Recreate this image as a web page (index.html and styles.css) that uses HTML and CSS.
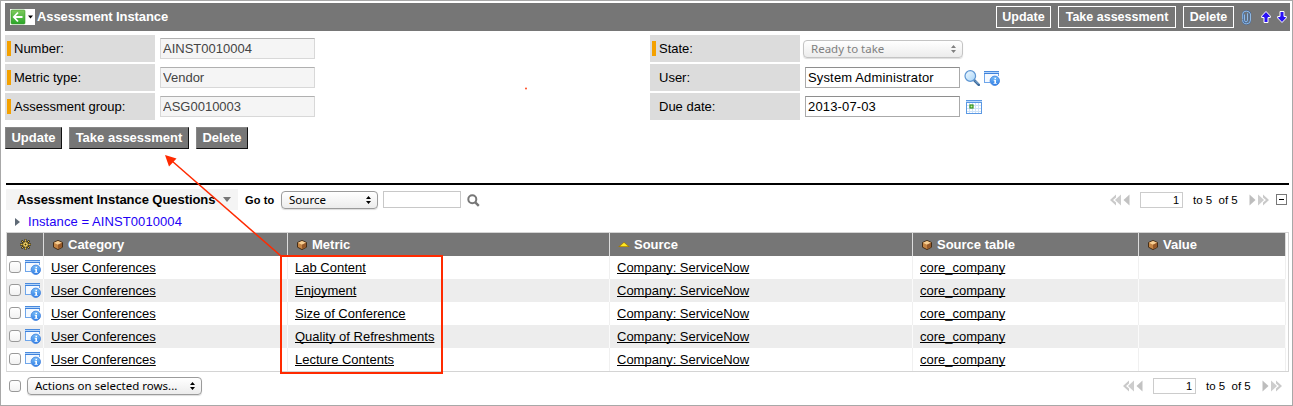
FILE: index.html
```html
<!DOCTYPE html>
<html lang="en">
<head>
<meta charset="utf-8">
<title>Assessment Instance</title>
<link rel="stylesheet" href="styles.css">
</head>
<body>
<svg class="defs" width="0" height="0">
  <defs>
    <linearGradient id="g-green" x1="0" y1="0" x2="0" y2="1"><stop offset="0" stop-color="#7fcb5e"/><stop offset="1" stop-color="#28a528"/></linearGradient>
    <linearGradient id="g-blue" x1="0" y1="0" x2="0" y2="1"><stop offset="0" stop-color="#7cc0f8"/><stop offset="1" stop-color="#2d7ce6"/></linearGradient>
    <linearGradient id="g-lens" x1="0" y1="0" x2="1" y2="1"><stop offset="0" stop-color="#f2faff"/><stop offset="1" stop-color="#a5d3f8"/></linearGradient>
  </defs>
  <symbol id="i-ref" viewBox="0 0 16 16">
    <path d="M1 4h14v8H1z" fill="#f4f9ff"/>
    <path d="M0 1h15v1H0z" fill="#4a8add"/><path d="M0 2h15v1H0z" fill="#b3d5fa"/><path d="M0 3h15v1H0z" fill="#3f82dc"/>
    <path d="M0 4h1v9H0zM1 12h5v1H1zM14 4h1v2h-1z" fill="#6fa6ea"/>
    <circle cx="10.800" cy="10.800" r="4.700" fill="url(#g-blue)" stroke="#3a7cdc" stroke-width=".8"/>
    <path d="M10.500 7.700H12v1.300h-1.500zM9.700 9.800H12v3.100h.8v.9H9.500v-.9h.9v-2.200h-.7z" fill="#fff"/>
  </symbol>
  <symbol id="i-box" viewBox="0 0 10 10">
    <path d="M5 .5 9.500 2.500v4.700L5 9.600.5 7.200V2.500z" fill="#c58544" stroke="#3b2510" stroke-width=".9"/>
    <path d="M5 1 9 2.700 5 4.700 1 2.700z" fill="#f8cf93"/>
    <path d="M5 4.700 9 2.800v4.100L5 9z" fill="#96592a"/>
  </symbol>
  <symbol id="i-rew" viewBox="0 0 20 12">
    <path d="M6 .5v3L3 6l3 2.500v3L0 6z" fill="#c9c9c9"/>
    <path d="M11 .5v11L5 6z" fill="#cdcdcd"/><path d="M19.500 .5v11L13.500 6z" fill="#c2c2c2"/>
  </symbol>
  <symbol id="i-fwd" viewBox="0 0 20 12">
    <path d="M.5 .5v11L6.500 6z" fill="#bdbdbd"/>
    <path d="M9 .5v11L15 6z" fill="#cdcdcd"/><path d="M14 .5 20 6l-6 5.500v-3L17 6l-3-2.500z" fill="#c9c9c9"/>
  </symbol>
  <symbol id="i-updown" viewBox="0 0 5 8"><path d="M2.500 0 5 3H0zM2.500 8 0 5h5z" fill="currentColor"/></symbol>
</svg>

<div class="frame">
  <header class="titlebar">
    <span class="back">
      <svg width="25" height="16" viewBox="0 0 25 16">
        <rect width="25" height="16" fill="#fff"/>
        <rect x="1" y="1" width="14" height="14" rx="1" fill="url(#g-green)" stroke="#3f9a2c" stroke-width=".6"/>
        <path d="M8 3.500 3.800 8 8 12.500M4 8h8.500" fill="none" stroke="#fff" stroke-width="1.800"/>
        <path d="M18 6.500h5l-2.500 3z" fill="#000"/>
      </svg>
    </span>
    <h1>Assessment Instance</h1>
    <div class="tools">
      <button class="tbtn w-update">Update</button>
      <button class="tbtn w-take">Take assessment</button>
      <button class="tbtn w-delete">Delete</button>
      <svg class="clip" width="11" height="15" viewBox="0 0 11 15"><path d="M3.500 4.500v5.700q0 1.600 1.500 1.600t1.500-1.600V3.300M2 9.500V4q0-2.800 3.500-2.800T9.300 4v6q0 3.800-3.800 3.800T2 10" fill="none" stroke="#44699a" stroke-width="1.800"/><path d="M3.500 4.500v5.700q0 1.600 1.500 1.600t1.500-1.600V3.300M1.700 9.500V4q0-2.800 3.500-2.800T9.500 4v6q0 3.800-4 3.800T1.700 10" fill="none" stroke="#98c2ec" stroke-width=".9"/></svg>
      <svg class="up" width="10" height="12" viewBox="0 0 10 12"><path d="M5 .5 9.300 5v1.500H7v5H3v-5H.7V5z" fill="#2a12f5" stroke="#fff"/></svg>
      <svg class="down" width="10" height="12" viewBox="0 0 10 12"><path d="M5 11.500 9.300 7V5.500H7v-5H3v5H.7V7z" fill="#2a12f5" stroke="#fff"/></svg>
    </div>
  </header>

  <section class="form">
    <div class="col">
      <div class="field"><label class="must">Number:</label><input class="ro" value="AINST0010004" readonly></div>
      <div class="field"><label class="must">Metric type:</label><input class="ro" value="Vendor" readonly></div>
      <div class="field"><label class="must">Assessment group:</label><input class="ro" value="ASG0010003" readonly></div>
    </div>
    <div class="col">
      <div class="field"><label class="must">State:</label><span class="select state">Ready to take<svg width="5" height="8"><use href="#i-updown"/></svg></span></div>
      <div class="field"><label>User:</label><input class="rw" value="System Administrator">
        <svg class="lens" width="16" height="16" viewBox="0 0 16 16"><path d="m10.500 10.500 4.300 4.300" stroke="#3c6a9c" stroke-width="2.600" stroke-linecap="round"/><path d="m11 10.500 3.600 3.600" stroke="#8fb8dd"/><circle cx="6.300" cy="6" r="5.300" fill="url(#g-lens)" stroke="#5d95d2" stroke-width="1.200"/></svg>
        <svg class="ref" width="16" height="16"><use href="#i-ref"/></svg></div>
      <div class="field"><label>Due date:</label><input class="rw" value="2013-07-03">
        <svg class="cal" width="16" height="16" viewBox="0 0 16 16"><path d="M0 1h16v14H0z" fill="#5b98e3"/><path d="M0 2h16v1H0z" fill="#b9d9fa"/><path d="M1 4h14v10H1z" fill="#fff"/><path d="M3.500 4v10M6.500 4v10M9.500 4v10M12.500 4v10M1 6.500h14M1 9.500h14M1 12.500h14" stroke="#cfe3f8"/><rect x="4" y="6" width="3" height="3" fill="#bdf29b" stroke="#32901b" stroke-width="1.200"/></svg></div>
    </div>
  </section>

  <div class="actions">
    <button class="btn b-update">Update</button>
    <button class="btn b-take">Take assessment</button>
    <button class="btn b-delete">Delete</button>
  </div>

  <section class="list">
    <div class="listbar">
      <div class="tab"><h2>Assessment Instance Questions</h2><svg width="8" height="5" viewBox="0 0 8 5"><path d="M0 0h8L4 5z" fill="#777"/></svg></div>
      <b class="goto">Go to</b>
      <span class="select source">Source<svg width="5" height="8"><use href="#i-updown"/></svg></span>
      <input class="find">
      <svg class="mag" width="13" height="13" viewBox="0 0 13 13"><circle cx="5.300" cy="5.300" r="4" fill="none" stroke="#777" stroke-width="2"/><path d="m8.300 8.300 3.500 3.500" stroke="#777" stroke-width="2.400"/></svg>
      <div class="pager">
        <svg width="20" height="12"><use href="#i-rew"/></svg><input class="page" value="1"><span>to 5&nbsp; of 5</span><svg width="20" height="12"><use href="#i-fwd"/></svg>
        <svg class="fold" width="11" height="11" viewBox="0 0 11 11"><rect x=".5" y=".5" width="10" height="10" fill="#fff" stroke="#777"/><path d="M3 5h5v1H3z" fill="#000"/></svg>
      </div>
    </div>
    <div class="crumbs"><svg width="5" height="8" viewBox="0 0 5 8"><path d="M0 0v8l5-4z" fill="#5f6a76"/></svg><a>Instance = AINST0010004</a></div>

    <div class="table">
      <div class="row head">
        <div><svg class="gear" width="11" height="11" viewBox="0 0 11 11"><path d="M5.500 0v11M0 5.500h11M1.600 1.600l7.800 7.800M9.400 1.600 1.600 9.400" stroke="#2e2400" stroke-width="1.800"/><path d="M5.500.5v10M.5 5.500h10M2 2l7 7M9 2 2 9" stroke="#f2c84b" stroke-width=".9"/><circle cx="5.500" cy="5.500" r="2.700" fill="#ffe27a" stroke="#4a3700" stroke-width=".8"/><circle cx="5.500" cy="5.500" r="1" fill="#4a3700"/></svg></div>
        <div><svg width="10" height="10"><use href="#i-box"/></svg>Category</div>
        <div><svg width="10" height="10"><use href="#i-box"/></svg>Metric</div>
        <div><svg class="sort" width="12" height="5" viewBox="0 0 12 5"><path d="M0 5 6 0l6 5z" fill="#a67c00"/><path d="M2 4.300 6 .8l4 3.500z" fill="#ffe925"/></svg>Source</div>
        <div><svg width="10" height="10"><use href="#i-box"/></svg>Source table</div>
        <div><svg width="10" height="10"><use href="#i-box"/></svg>Value</div>
      </div>
      <div class="row"><div><i class="check"></i><svg width="16" height="16"><use href="#i-ref"/></svg></div><div><a>User Conferences</a></div><div><a>Lab Content</a></div><div><a>Company: ServiceNow</a></div><div><a>core_company</a></div><div></div></div>
      <div class="row"><div><i class="check"></i><svg width="16" height="16"><use href="#i-ref"/></svg></div><div><a>User Conferences</a></div><div><a>Enjoyment</a></div><div><a>Company: ServiceNow</a></div><div><a>core_company</a></div><div></div></div>
      <div class="row"><div><i class="check"></i><svg width="16" height="16"><use href="#i-ref"/></svg></div><div><a>User Conferences</a></div><div><a>Size of Conference</a></div><div><a>Company: ServiceNow</a></div><div><a>core_company</a></div><div></div></div>
      <div class="row"><div><i class="check"></i><svg width="16" height="16"><use href="#i-ref"/></svg></div><div><a>User Conferences</a></div><div><a>Quality of Refreshments</a></div><div><a>Company: ServiceNow</a></div><div><a>core_company</a></div><div></div></div>
      <div class="row"><div><i class="check"></i><svg width="16" height="16"><use href="#i-ref"/></svg></div><div><a>User Conferences</a></div><div><a>Lecture Contents</a></div><div><a>Company: ServiceNow</a></div><div><a>core_company</a></div><div></div></div>
    </div>

    <footer class="listfoot">
      <i class="check"></i>
      <span class="select bulk">Actions on selected rows...<svg width="5" height="8"><use href="#i-updown"/></svg></span>
      <div class="pager">
        <svg width="20" height="12"><use href="#i-rew"/></svg><input class="page" value="1"><span>to 5&nbsp; of 5</span><svg width="20" height="12"><use href="#i-fwd"/></svg>
      </div>
    </footer>
  </section>

  <svg class="callout" width="1293" height="406" viewBox="0 0 1293 406">
    <rect x="281" y="256" width="161" height="117" fill="none" stroke="#ff2a00" stroke-width="2"/>
    <path d="M281 256 172 161" stroke="#ff2a00" stroke-width="1.500"/>
    <path d="m165 155 11.500 3.500-7.500 8z" fill="#ff2a00"/>
    <circle cx="526" cy="88.500" r="1" fill="#ff4a20"/>
  </svg>
</div>
</body>
</html>
```
FILE: styles.css
```css
* { box-sizing: border-box; }
body { margin: 0; background: #fff; font: 13px/16px "Liberation Sans", Arial, sans-serif; color: #000; }
h1, h2 { margin: 0; font-size: 13px; font-weight: bold; white-space: nowrap; }
svg { display: block; flex: none; }
input, button { margin: 0; font: inherit; border-radius: 0; outline: 0; }
.defs { position: absolute; }
.frame { position: relative; width: 1293px; height: 406px; border: 1px solid #a8a8a8; padding: 2px 2px 0 4px; overflow: hidden; }
.callout { position: absolute; left: -1px; top: -1px; pointer-events: none; }

.titlebar { display: flex; align-items: center; height: 28px; width: 1285px; padding-left: 5px; background: #767676; color: #fff; }
.titlebar h1 { margin-left: 2px; letter-spacing: -.1px; }
.tools { display: flex; align-items: center; margin-left: auto; padding-right: 3px; }
.tbtn { height: 22px; padding: 0; margin-right: 7px; border: 1px solid #fff; background: #767676; color: #fff; font-weight: bold; font-size: 12.5px; line-height: 18px; text-align: center; }
.w-update { width: 55px; }
.w-take { width: 118px; }
.w-delete { width: 51px; }
.up { margin-left: 9px; }
.down { margin-left: 6px; }

.form { display: flex; gap: 330px; padding-top: 4px; }
.col { display: flex; flex-direction: column; gap: 2px; width: 315px; }
.col + .col { width: 400px; }
.field { display: flex; align-items: center; height: 27px; }
.field label { display: flex; align-items: center; width: 150px; height: 27px; padding-left: 9px; background: #dcdcdc; flex: none; }
.field label.must { padding-left: 2px; }
.must::before { content: ""; width: 4px; height: 15px; margin-right: 3px; background: #f4a100; }
.ro, .rw { width: 155px; height: 21px; padding: 0 2px; margin-left: 5px; border: 1px solid #d8d8d8; border-top: 1px solid #b0b0b0; background: #f5f5f5; color: #444; flex: none; }
.rw { border: 1px solid #aaa; border-top: 1px solid #8e8e8e; background: #fff; color: #000; letter-spacing: .15px; }
.lens { margin-left: 4px; }
.ref { margin-left: 4px; }
.cal { margin-left: 6px; }

.select { display: flex; align-items: center; justify-content: space-between; height: 18px; padding: 0 6px 0 7px; border: 1px solid #9b9b9b; border-radius: 4px; background: linear-gradient(#fff, #ececec); box-shadow: 0 1px 1px #ddd; color: #000; font: 11.500px/16px "Noto Sans", "Open Sans", sans-serif; white-space: nowrap; }
.state { width: 160px; margin-left: 3px; border-color: #c4c4c4; color: #808080; }

.actions { display: flex; gap: 7px; padding-top: 7px; height: 63px; }
.btn { height: 22px; padding: 0; border: 1px solid #888; border-right-color: #111; border-bottom-color: #111; background: #767676; color: #fff; font-weight: bold; line-height: 18px; }
.b-update { width: 57px; }
.b-take { width: 120px; }
.b-delete { width: 52px; }

.list { margin-left: 1px; width: 1283px; border-top: 2px solid #000; }
.listbar { display: flex; align-items: center; height: 29px; }
.tab { display: flex; align-items: center; width: 232px; height: 21px; padding-left: 11px; background: #f4f4f4; }
.tab h2 { width: 206px; letter-spacing: -.06px; }
.goto { margin-left: 7px; width: 36px; font-size: 11px; letter-spacing: .1px; }
.source { width: 97px; }
.find { width: 78px; height: 17px; margin-left: 5px; border: 1px solid #c8c8c8; }
.mag { margin-left: 6px; margin-top: 2px; }
.pager { display: flex; align-items: center; margin-left: auto; font-size: 11.5px; }
.page { width: 43px; height: 16px; margin-left: 10px; padding: 0 3px; border: 1px solid #ccc; text-align: right; font-size: 11px; }
.pager span { width: 66px; padding-left: 10px; white-space: nowrap; }
.fold { margin: 0 2px 0 7px; }
.crumbs { display: flex; align-items: center; height: 18px; padding: 0 0 3px 9px; color: #2200f5; }
.crumbs a { margin-left: 8px; letter-spacing: .08px; }

.table { border: 1px solid #d4d4d4; border-left-color: #ddd; padding-right: 3px; }
.row { display: grid; grid-template-columns: 37px 244px 322px 303px 226px 147px; height: 23px; }
.row > div { display: flex; align-items: center; padding-left: 7px; border-right: 1px solid #f0f0f0; }
.row > div:first-child { padding: 0 0 1px 2px; }
.row:nth-child(odd):not(.head) { background: #ededed; }
.row:nth-child(odd):not(.head) > div { border-right-color: #fafafa; }
.row a { text-decoration: underline; text-decoration-thickness: 1px; text-underline-offset: 1px; text-decoration-skip-ink: none; }
.row > div > svg { margin-left: 4px; }
.head { background: #767676; color: #fff; font-weight: bold; }
.head > div { border-right-color: #ddd; }
.row.head > div > svg { margin: 1px 5px 0 2px; }
.row.head > div > .gear { margin: 0 0 0 11px; }
.row.head > div > .sort { margin: 0 4px 0 1px; }
.check { width: 12px; height: 12px; border: 1px solid #999; border-radius: 3px; background: linear-gradient(#fff, #f2f2f2); flex: none; }

.listfoot { display: flex; align-items: center; height: 28px; padding: 0 7px 0 3px; }
.bulk { width: 175px; margin-left: 6px; }
```
